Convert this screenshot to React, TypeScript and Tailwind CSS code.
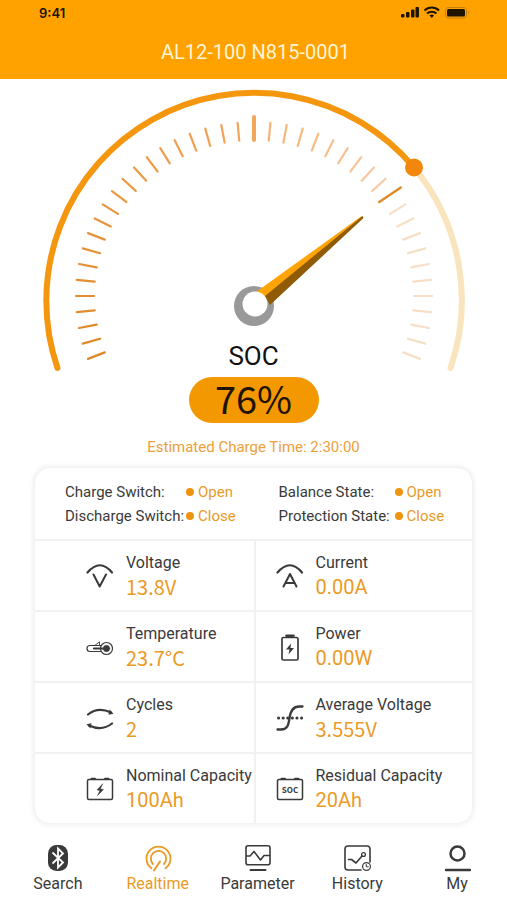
import type { ReactNode } from 'react'

const roboto = "font-['Roboto','Liberation_Sans',sans-serif]"
const noto = "font-['Noto_Sans_CJK_SC','Noto_Sans',sans-serif]"

const statuses = [
  [
    { label: 'Charge Switch:', value: 'Open' },
    { label: 'Discharge Switch:', value: 'Close' },
  ],
  [
    { label: 'Balance State:', value: 'Open' },
    { label: 'Protection State:', value: 'Close' },
  ],
]

function Icon({ children }: { children: ReactNode }) {
  return (
    <svg
      viewBox="0 0 28 28"
      className="w-7 h-7 shrink-0"
      fill="none"
      stroke="currentColor"
      strokeWidth="1.8"
      strokeLinecap="round"
      strokeLinejoin="round"
      aria-hidden="true"
    >
      {children}
    </svg>
  )
}

const batteryCase = (
  <>
    <rect x="1.5" y="4.5" width="25" height="20" rx="1.5" strokeWidth="1.5" />
    <path d="M5.5 3.8h3.5M19 3.8h3.5" strokeWidth="2" />
  </>
)

const metrics = [
  {
    label: 'Voltage',
    value: '13.8V',
    font: noto,
    icon: (
      <Icon>
        <path d="M1.5 10.5Q14 -4 26 10.5" strokeWidth="2.2" />
        <path d="M7.5 12.5l6.2 12L20 12.5" strokeWidth="2" />
      </Icon>
    ),
  },
  {
    label: 'Current',
    value: '0.00A',
    font: roboto,
    icon: (
      <Icon>
        <path d="M1.5 10.5Q14 -4 26 10.5" strokeWidth="2.2" />
        <path d="M7.5 24.5L14 12l6.5 12.5M10 21h8" strokeWidth="2" />
      </Icon>
    ),
  },
  {
    label: 'Temperature',
    value: '23.7°C',
    font: noto,
    icon: (
      <Icon>
        <path d="M15.5 12.5H4a3 3 0 0 0 0 6h11.5" strokeWidth="1.2" />
        <path d="M8 15.5h10" strokeWidth="2.2" />
        <path d="M9 12.3l4.5-3.5v3.5" strokeWidth="0.9" />
        <circle cx="20.5" cy="15.5" r="6" strokeWidth="1.2" />
        <circle cx="20.5" cy="15.5" r="3.2" fill="currentColor" strokeWidth="0.5" />
      </Icon>
    ),
  },
  {
    label: 'Power',
    value: '0.00W',
    font: roboto,
    icon: (
      <Icon>
        <rect x="6" y="4.5" width="16" height="22.5" rx="1.5" strokeWidth="1.7" />
        <path d="M10.5 2.8h7" strokeWidth="2.6" />
        <path d="M15 10.5l-5 6h3.5l-1 5 5.5-6.5h-3.5z" fill="currentColor" stroke="none" />
      </Icon>
    ),
  },
  {
    label: 'Cycles',
    value: '2',
    font: noto,
    icon: (
      <Icon>
        <path d="M2 10.5Q12 2.5 25 8.5" strokeWidth="2.2" />
        <path d="M23.5 5.5l4 4.2-5 1z" fill="currentColor" stroke="none" />
        <path d="M26 19.5Q16 27.5 3 21.5" strokeWidth="2.2" />
        <path d="M4.5 24.5l-4-4.2 5-1z" fill="currentColor" stroke="none" />
      </Icon>
    ),
  },
  {
    label: 'Average Voltage',
    value: '3.555V',
    font: noto,
    icon: (
      <Icon>
        <path d="M1.5 25.5H5C11.5 25.5 12.5 21 13.5 14S17 2.5 23 2.5h3.5" strokeWidth="2.3" />
        <path d="M2.5 14h24" strokeWidth="3" strokeDasharray="0.1 4.5" />
      </Icon>
    ),
  },
  {
    label: 'Nominal Capacity',
    value: '100Ah',
    font: roboto,
    icon: (
      <Icon>
        {batteryCase}
        <path d="M16.5 9l-5.5 6 3 .5-2.500 5 6-6-3-.5z" fill="currentColor" strokeWidth="0.5" />
      </Icon>
    ),
  },
  {
    label: 'Residual Capacity',
    value: '20Ah',
    font: roboto,
    icon: (
      <Icon>
        {batteryCase}
        <text
          x="14"
          y="18"
          textAnchor="middle"
          fontSize="8"
          fontWeight="700"
          fill="currentColor"
          stroke="none"
          className={noto}
        >
          SOC
        </text>
      </Icon>
    ),
  },
]

const tabs = [
  {
    label: 'Search',
    icon: (
      <Icon>
        <rect x="4" y="1" width="20" height="26" rx="8.5" fill="currentColor" stroke="none" />
        <path d="M9 9l10 9.5-5 5V4.500l5 5-10 9.500" stroke="#fff" strokeWidth="1.8" strokeLinejoin="miter" />
      </Icon>
    ),
  },
  {
    label: 'Realtime',
    active: true,
    icon: (
      <Icon>
        <path d="M7.500 24.3A12 12 0 1 1 21.500 24.3" />
        <path d="M9 20A7.700 7.700 0 1 1 20 20" />
        <path d="M16 17.5L10 26.5" strokeWidth="2" />
      </Icon>
    ),
  },
  {
    label: 'Parameter',
    icon: (
      <Icon>
        <rect x="3" y="1.8" width="24" height="19" rx="2" strokeWidth="1.6" />
        <path d="M3.5 12h3.5l4-4.500 6.500 8.500 3.500-4.500h5.500" strokeWidth="1.6" />
        <path d="M7.5 26h15" strokeWidth="2" />
      </Icon>
    ),
  },
  {
    label: 'History',
    icon: (
      <Icon>
        <path d="M27 18V5a3 3 0 0 0-3-3h-19a3 3 0 0 0-3 3v18a3 3 0 0 0 3 3H18" strokeWidth="1.6" />
        <path d="M5.5 15.5h3l4.500 3.500 6-7" strokeWidth="1.6" />
        <circle cx="20.5" cy="10.5" r="1.9" strokeWidth="1.3" />
        <circle cx="23.5" cy="22.5" r="3.9" strokeWidth="1.2" />
        <path d="M23.300 20.5v2.300h2" strokeWidth="1" />
      </Icon>
    ),
  },
  {
    label: 'My',
    icon: (
      <Icon>
        <circle cx="14.5" cy="9.5" r="7" strokeWidth="2.5" />
        <path d="M3 26h24" strokeWidth="2.5" />
      </Icon>
    ),
  },
]

const ticks = Array.from({ length: 43 }, (_, i) => i - 21)

function tickColor(i: number) {
  if (i === 10) return '#e08a2c'
  if (i > 10) return '#f6dfc6'
  if (i > 0) return `rgb(246, ${176 + i * 3}, ${110 + i * 6})`
  const t = -i / 21
  return `rgb(${Math.round(244 - t * 22)}, ${Math.round(166 - t * 30)}, ${Math.round(92 - t * 54)})`
}

function Gauge() {
  return (
    <svg viewBox="0 79 507 300" className="block w-full" role="img" aria-label="State of charge 76%">
      <path d="M414 167.5A208 208 0 0 1 450.5 368" fill="none" stroke="#f9e4bd" strokeWidth="6" strokeLinecap="round" />
      <path d="M57.5 368A208 208 0 0 1 414 167.5" fill="none" stroke="#f4970f" strokeWidth="6" strokeLinecap="round" />
      <circle cx="414" cy="167.5" r="9" fill="#f2870c" />
      {ticks.map((i) => {
        const a = (i * Math.PI) / 34
        const extra = i === 0 ? 5 : i === 10 ? 6 : 0
        return (
          <line
            key={i}
            x1={254 + Math.sin(a) * (178 + extra)}
            y1={296 - Math.cos(a) * (174 + extra)}
            x2={254 + Math.sin(a) * (i === 10 ? 157 : 160)}
            y2={296 - Math.cos(a) * 156}
            stroke={tickColor(i)}
            strokeWidth={i === 0 ? 4 : i === 10 ? 2.5 : 2.2}
            strokeLinecap="round"
          />
        )
      })}
      <circle cx="254" cy="306" r="20" fill="#999" />
      <path d="M256 292L361 216.5l2 0L267 299z" fill="#fea406" />
      <path d="M265 296L362.500 216l1 2L270 305z" fill="#8f5b05" />
      <circle cx="255" cy="304" r="12.5" fill="#fff" />
    </svg>
  )
}

function StatusIcons() {
  return (
    <svg viewBox="0 0 70 14" className="w-[70px] h-[14px]" aria-hidden="true">
      <g fill="#1f1402">
        <rect x="0" y="8" width="3.5" height="3.5" rx="1" />
        <rect x="5" y="6" width="3.5" height="5.5" rx="1" />
        <rect x="10" y="3.5" width="3.5" height="8" rx="1" />
        <rect x="14.5" y="1" width="3.5" height="10.5" rx="1" />
        <rect x="46" y="3" width="18" height="7.5" rx="1.5" />
      </g>
      <g fill="none" stroke="#1f1402" strokeWidth="2">
        <path d="M23.5 4.500a10.500 10.500 0 0 1 14.500 0" />
        <path d="M26 7.500a7 7 0 0 1 9.500 0" />
      </g>
      <path d="M28.500 9.500a3.500 3.500 0 0 1 4.500 0L30.750 12z" fill="#1f1402" />
      <rect x="44.5" y="1.5" width="21" height="10.5" rx="3" fill="none" stroke="#c47f06" />
      <path d="M67 5q1.500 1.500 0 3.500z" fill="#a86c05" />
    </svg>
  )
}

export default function App() {
  return (
    <div className={`min-h-screen bg-white text-[#3a3a3a] ${roboto}`}>
      <header className="bg-[#ffa200] h-[79px]">
        <div className="flex items-center justify-between h-[26px] pl-[39px] pr-9">
          <span className="text-[13px] leading-4 font-semibold text-[#1f1402] font-['Inter','Roboto',sans-serif]">9:41</span>
          <StatusIcons />
        </div>
        <h1 className="pl-1 text-center text-[20px] leading-[52px] text-[#fff4d8]">AL12-100 N815-0001</h1>
      </header>

      <main>
        <Gauge />
        <section className="relative -mt-9 flex flex-col items-center">
          <h2 className="text-[26px] leading-[26px] text-[#111]">SOC</h2>
          <p className={`mt-2 w-[130px] h-[46px] rounded-full bg-[#f39800] text-center text-[38px] leading-[41px] text-[#1f1208] ${noto}`}>
            76%
          </p>
          <p className="mt-3 text-[15px] leading-6 text-[#eda03a]">Estimated Charge Time: 2:30:00</p>
        </section>

        <section className="mt-2 mx-[34px] rounded-2xl bg-white border border-[#f3f3f3] shadow-[0_0_5px_1px_rgba(0,0,0,0.07)]">
          <div className="grid grid-cols-2 h-[71px] pt-3">
            {statuses.map((group, g) => (
              <dl key={g} className={g === 0 ? 'pl-[30px]' : 'pl-[25px]'}>
                {group.map((s) => (
                  <div key={s.label} className="flex items-center text-[15px] leading-6">
                    <dt className={`whitespace-nowrap ${g === 0 ? 'w-[121px]' : 'w-[116px]'}`}>{s.label}</dt>
                    <dd className="flex items-center gap-1 text-[#eb9a26]">
                      <span className="w-2 h-2 rounded-full bg-[#ee950f]" />
                      {s.value}
                    </dd>
                  </div>
                ))}
              </dl>
            ))}
          </div>
          <div className="grid grid-cols-2">
            {metrics.map((m, i) => (
              <div
                key={m.label}
                className={`flex items-center gap-3 h-[71px] border-t-2 border-[#f1f1f1] ${
                  i % 2 === 0 ? 'pl-[51px]' : 'pl-5 border-l-2'
                }`}
              >
                {m.icon}
                <div className="whitespace-nowrap pb-px">
                  <p className="text-[16px] leading-6">{m.label}</p>
                  <p className={`text-[20px] leading-6 text-[#eb9a26] ${m.font}`}>{m.value}</p>
                </div>
              </div>
            ))}
          </div>
        </section>
      </main>

      <nav className="mt-5 pl-2 flex">
        {tabs.map((t) => (
          <a
            key={t.label}
            href="#"
            aria-current={t.active ? 'page' : undefined}
            className={`flex-1 flex flex-col items-center text-[16px] leading-6 ${t.active ? 'text-[#eb9a26]' : ''}`}
          >
            {t.icon}
            {t.label}
          </a>
        ))}
      </nav>
    </div>
  )
}
